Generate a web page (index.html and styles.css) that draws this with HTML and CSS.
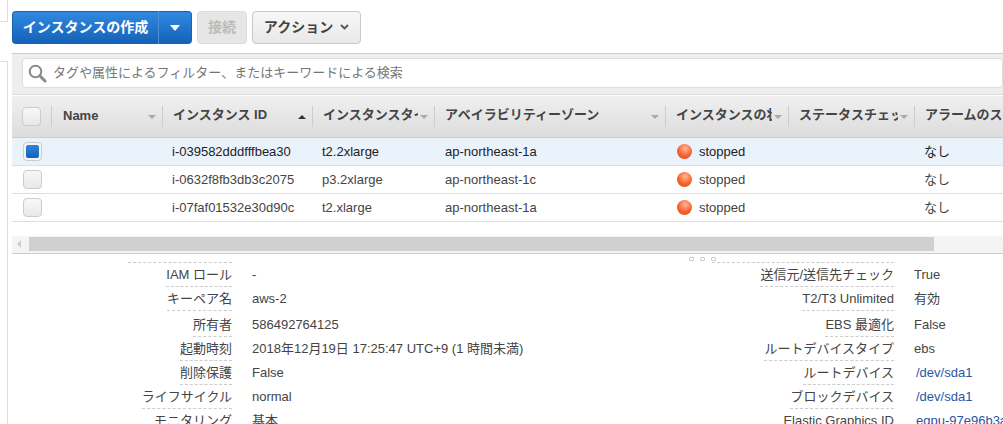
FILE: index.html
```html
<!DOCTYPE html>
<html lang="ja">
<head>
<meta charset="utf-8">
<title>インスタンス</title>
<link rel="stylesheet" href="styles.css">
</head>
<body>
<div class="page">
  <aside class="side">
    <div class="side-top"></div>
    <div class="side-bottom"></div>
  </aside>
  <main class="main">
    <div class="toolbar">
      <div class="split">
        <button class="btn-primary">インスタンスの作成</button>
        <button class="btn-caret"><span class="caret-white"></span></button>
      </div>
      <button class="btn-disabled">接続</button>
      <button class="btn-action">アクション<span class="chev"><svg width="9" height="6" viewBox="0 0 9 6"><path d="M1 1l3.5 3.5L8 1" fill="none" stroke="#555" stroke-width="1.8"/></svg></span></button>
    </div>
    <div class="filter">
      <div class="search">
        <svg class="mag" width="19" height="19" viewBox="0 0 19 19"><circle cx="7.5" cy="7.5" r="5.8" fill="none" stroke="#8a8a8a" stroke-width="2"/><path d="M11.8 11.8l5.2 5.2" stroke="#8a8a8a" stroke-width="3" stroke-linecap="round"/></svg>
        <span class="placeholder">タグや属性によるフィルター、またはキーワードによる検索</span>
      </div>
    </div>
    <div class="thead grid-row">
      <div class="th th-check"><span class="check"></span></div>
      <div class="th th-namecell"><b class="th-name">Name</b><i class="sort"></i></div>
      <div class="th"><span class="th-label">インスタンス ID</span><i class="sort up"></i></div>
      <div class="th"><span class="th-label">インスタンスタイプ</span><i class="sort"></i></div>
      <div class="th"><span class="th-label">アベイラビリティーゾーン</span><i class="sort"></i></div>
      <div class="th"><span class="th-label">インスタンスの状態</span><i class="sort"></i></div>
      <div class="th"><span class="th-label">ステータスチェック</span><i class="sort"></i></div>
      <div class="th th-last"><span class="th-label">アラームのステータス</span></div>
    </div>
    <div class="row grid-row selected">
      <div class="td td-check"><span class="check on"><span class="check-fill"></span></span></div>
      <div class="td"></div>
      <div class="td">i-039582dddfffbea30</div>
      <div class="td">t2.2xlarge</div>
      <div class="td td-wide">ap-northeast-1a</div>
      <div class="td td-state"><span class="ball"></span>stopped</div>
      <div class="td"></div>
      <div class="td">なし</div>
    </div>
    <div class="row grid-row">
      <div class="td td-check"><span class="check"></span></div>
      <div class="td"></div>
      <div class="td">i-0632f8fb3db3c2075</div>
      <div class="td">p3.2xlarge</div>
      <div class="td td-wide">ap-northeast-1c</div>
      <div class="td td-state"><span class="ball"></span>stopped</div>
      <div class="td"></div>
      <div class="td">なし</div>
    </div>
    <div class="row grid-row">
      <div class="td td-check"><span class="check"></span></div>
      <div class="td"></div>
      <div class="td">i-07faf01532e30d90c</div>
      <div class="td">t2.xlarge</div>
      <div class="td td-wide">ap-northeast-1a</div>
      <div class="td td-state"><span class="ball"></span>stopped</div>
      <div class="td"></div>
      <div class="td">なし</div>
    </div>
    <div class="hscroll">
      <span class="arrow-left"></span>
      <div class="thumb"></div>
    </div>
    <div class="details">
      <div class="handle"><span></span><span></span><span></span></div>
      <dl class="col col-left">
        <div class="item"><dt><span>IAM ロール</span></dt><dd>-</dd></div>
        <div class="item"><dt><span>キーペア名</span></dt><dd>aws-2</dd></div>
        <div class="item tall"><dt><span>所有者</span></dt><dd>586492764125</dd></div>
        <div class="item"><dt><span>起動時刻</span></dt><dd>2018年12月19日 17:25:47 UTC+9 (1 時間未満)</dd></div>
        <div class="item"><dt><span>削除保護</span></dt><dd>False</dd></div>
        <div class="item"><dt><span>ライフサイクル</span></dt><dd>normal</dd></div>
        <div class="item"><dt><span>モニタリング</span></dt><dd>基本</dd></div>
      </dl>
      <dl class="col col-right">
        <div class="item"><dt><span>送信元/送信先チェック</span></dt><dd>True</dd></div>
        <div class="item"><dt><span>T2/T3 Unlimited</span></dt><dd>有効</dd></div>
        <div class="item tall"><dt><span>EBS 最適化</span></dt><dd>False</dd></div>
        <div class="item"><dt><span>ルートデバイスタイプ</span></dt><dd>ebs</dd></div>
        <div class="item"><dt><span>ルートデバイス</span></dt><dd><a href="#">/dev/sda1</a></dd></div>
        <div class="item"><dt><span>ブロックデバイス</span></dt><dd><a href="#">/dev/sda1</a></dd></div>
        <div class="item"><dt><span>Elastic Graphics ID</span></dt><dd><a href="#">egpu-97e96b3a</a></dd></div>
      </dl>
    </div>
  </main>
</div>
</body>
</html>
```
FILE: styles.css
```css
* { box-sizing: border-box; }
html, body { margin: 0; padding: 0; height: 424px; overflow: hidden; background: #fff; }
body { font-family: "Liberation Sans", "Noto Sans CJK JP", sans-serif; font-size: 13px; color: #444; }
button { font-family: inherit; padding: 0; margin: 0; }

.page { display: flex; width: 1003px; height: 424px; overflow: hidden; }
.side { width: 12px; flex: none; display: flex; flex-direction: column; }
.side-top { width: 8px; height: 22px; border-right: 1px solid #ddd; border-bottom: 1px solid #ddd; }
.side-bottom { width: 8px; flex: 1; margin-top: 39px; border-right: 1px solid #ddd; border-top: 1px solid #ddd; }
.main { width: 991px; flex: none; }

.toolbar { display: flex; gap: 5px; padding-top: 11px; height: 53px; align-items: flex-start; }
.split { display: flex; height: 33px; }
.btn-primary, .btn-caret { height: 33px; border: 1px solid #1a63b0; color: #fff; background: linear-gradient(#3089e0, #1462b8); font-weight: bold; font-size: 14px; }
.btn-primary { width: 147px; border-radius: 4px 0 0 4px; border-right-color: #4a8fd4; padding-bottom: 3px; }
.btn-caret { width: 33px; border-radius: 0 4px 4px 0; border-left: 0; display: flex; align-items: center; justify-content: center; }
.caret-white { width: 0; height: 0; border-left: 5.5px solid transparent; border-right: 5.5px solid transparent; border-top: 6px solid #fff; }
.btn-disabled { width: 50px; height: 33px; border: 1px solid #ddd; border-radius: 4px; background: #e6e6e6; color: #bbb; font-weight: bold; font-size: 14px; padding-bottom: 3px; }
.btn-action { width: 109px; height: 33px; border: 1px solid #c8c8c8; border-radius: 4px; background: linear-gradient(#f8f8f8, #e8e8e8); color: #444; font-size: 14px; font-weight: bold; display: flex; align-items: center; justify-content: center; gap: 7px; padding-bottom: 3px; }
.chev { display: inline-flex; padding-top: 1px; }

.filter { height: 42px; background: #eee; border-top: 1px solid #ccc; border-bottom: 1px solid #ddd; padding: 4px 0 0 10px; }
.search { height: 30px; background: #fff; border: 1px solid #ddd; border-radius: 4px; display: flex; align-items: center; padding-left: 5px; gap: 6px; }
.mag { flex: none; }
.placeholder { color: #777; font-size: 13px; padding-bottom: 3px; }

.grid-row { display: grid; grid-template-columns: 39px 111px 150px 122px 231px 123px 126px 89px; }
.thead { height: 43px; background: linear-gradient(#f0f0f0, #dcdcdc); border-top: 1px solid #fff; border-bottom: 1px solid #ccc; align-items: center; }
.th { height: 21px; display: flex; align-items: center; position: relative; padding-left: 10px; border-left: 1px solid #ccc; font-weight: bold; color: #444; overflow: hidden; white-space: nowrap; }
.th-check { border-left: 0; padding-left: 10px; }
.th-namecell { padding-left: 11px; }
.th-name { color: #444; padding-bottom: 2px; }
.th-label { display: block; overflow: hidden; white-space: nowrap; flex: 1; min-width: 0; margin-right: 16px; padding-bottom: 3px; line-height: 18px; }
.th-last .th-label { margin-right: 0; overflow: visible; }
.sort { position: absolute; right: 6px; top: 9px; width: 0; height: 0; border-left: 4px solid transparent; border-right: 4px solid transparent; border-top: 4px solid #aaa; }
.sort.up { border-top: 0; border-bottom: 4px solid #333; }

.check { display: block; width: 19px; height: 19px; border: 1px solid #ccc; border-radius: 4px; background: linear-gradient(#f8f8f8, #e8e8e8); padding: 2px; }
.check.on { background: #f4f4f4; }
.check-fill { display: block; width: 13px; height: 13px; border-radius: 2px; background: linear-gradient(#2f86dc, #1461b6); }

.row { height: 28px; border-bottom: 1px solid #ddd; align-items: center; background: #fff; color: #444; }
.row.selected { background: #eaf2fc; color: #222; border-bottom-color: #d8dfe8; }
.td { padding-left: 10px; white-space: nowrap; display: flex; align-items: center; line-height: 27px; overflow: hidden; height: 27px; }
.td-check { padding-left: 11px; }
.td-wide { padding-left: 11px; }
.td-state { padding-left: 12px; }
.ball { display: inline-block; flex: none; width: 15px; height: 15px; margin-right: 7px; margin-bottom: 1px; border-radius: 50%; background: radial-gradient(circle at 55% 30%, #ffb894, #f7602c 55%, #e2441a); }

.hscroll { height: 18px; margin-top: 14px; background: #f4f4f4; border-bottom: 1px solid #ccc; display: flex; align-items: center; padding-bottom: 1px; }
.arrow-left { width: 0; height: 0; margin: 0 8px 0 5px; border-top: 4px solid transparent; border-bottom: 4px solid transparent; border-right: 4px solid #ccc; }
.thumb { width: 905px; height: 14px; background: #d0d0d0; }

.details { display: flex; position: relative; padding-top: 8px; }
.handle { position: absolute; left: 677px; top: 3px; display: flex; gap: 6px; }
.handle span { width: 5px; height: 4px; border: 1px solid #ccc; border-radius: 1px; }
.col { margin: 0; display: flex; flex-direction: column; }
.col::before { content: ""; display: block; flex: none; border-top: 1px dashed #ccc; }
.col-left { width: 465px; --label: 220px; }
.col-left::before { margin-left: 116px; width: 104px; }
.col-right { --label: 417px; }
.col-right::before { margin-left: 235px; width: 182px; }
.item { display: flex; height: 24px; align-items: flex-end; flex: none; }
.item.tall { height: 26px; }
dt { width: var(--label); flex: none; display: flex; justify-content: flex-end; }
dt span { display: block; height: 24px; line-height: 23px; border-bottom: 1px dashed #ccc; white-space: nowrap; }
dd { margin: 0 0 0 20px; white-space: nowrap; height: 24px; line-height: 23px; }
dd a { color: #2a55a8; text-decoration: none; margin-left: 2px; }
```
